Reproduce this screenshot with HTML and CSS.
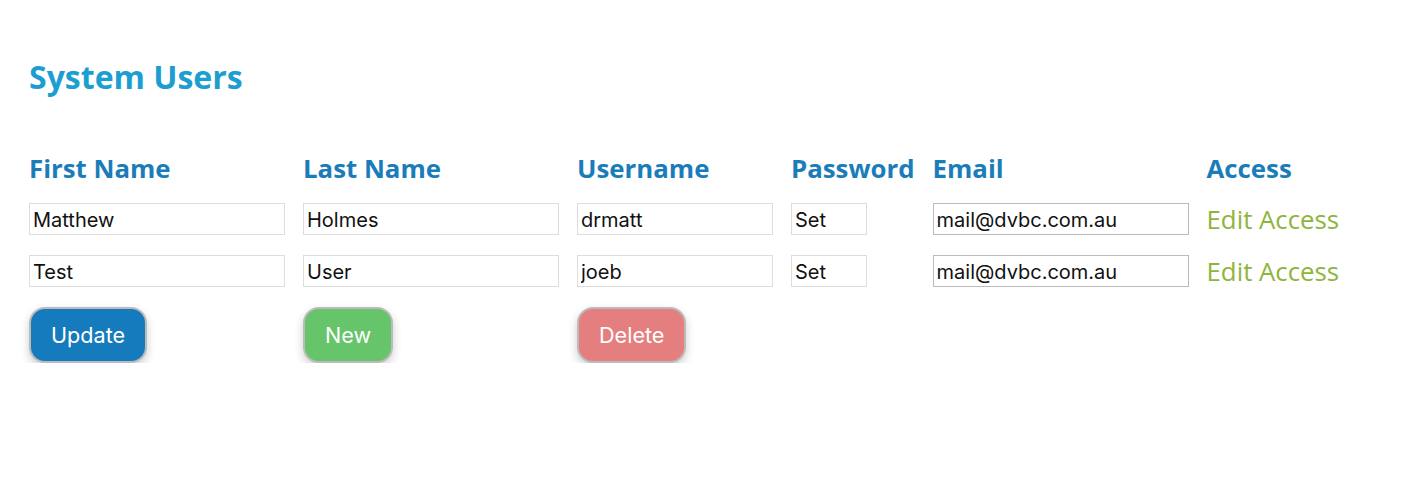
FILE: index.html
```html
<!DOCTYPE html>
<html lang="en">
<head>
    <meta charset="UTF-8">
    <title>System Users</title>
    <link rel="stylesheet" href="styles.css">
</head>
<body>
    <div class="page">
        <h1 class="title">System Users</h1>

        <div class="users">
            <div class="col-head">First Name</div>
            <div class="col-head">Last Name</div>
            <div class="col-head">Username</div>
            <div class="col-head">Password</div>
            <div class="col-head">Email</div>
            <div class="col-head">Access</div>

            <!-- user 1 -->
            <input class="field" type="text" value="Matthew">
            <input class="field" type="text" value="Holmes">
            <input class="field" type="text" value="drmatt">
            <input class="field pw" type="text" value="Set">
            <input class="field email" type="text" value="mail@dvbc.com.au">
            <a class="access" href="#">Edit Access</a>

            <!-- user 2 -->
            <input class="field" type="text" value="Test">
            <input class="field" type="text" value="User">
            <input class="field" type="text" value="joeb">
            <input class="field pw" type="text" value="Set">
            <input class="field email" type="text" value="mail@dvbc.com.au">
            <a class="access" href="#">Edit Access</a>

            <button class="btn btn-update">Update</button>
            <button class="btn btn-new">New</button>
            <button class="btn btn-delete">Delete</button>
        </div>
    </div>
</body>
</html>
```

FILE: styles.css
```css
body {
    margin: 0;
    background: #ffffff;
    font-family: "Open Sans", sans-serif;
}

.page {
    padding: 57px 29px 0;
}

.title {
    margin: 0 0 56px;
    font-size: 32px;
    line-height: 40px;
    font-weight: 700;
    color: #1c9fd0;
}

.users {
    display: grid;
    grid-template-columns: 256px 256px 196px auto 256px auto;
    justify-content: start;
    column-gap: 18px;
    row-gap: 20px;
    align-items: center;
    justify-items: start;
}

.col-head {
    font-size: 25.8px;
    line-height: 30px;
    font-weight: 700;
    color: #1a7db9;
}

.field {
    box-sizing: border-box;
    width: 100%;
    height: 32px;
    margin: 0;
    padding: 2px 3px 0;
    border: 1px solid #dddddd;
    font-family: "Inter", sans-serif;
    font-size: 20px;
    color: #111111;
    background: #ffffff;
}

.field.pw {
    width: 76px;
}

.field.email {
    border-color: #bbbbbb;
}

.access {
    font-size: 25.8px;
    line-height: 32px;
    color: #8fb43c;
    text-decoration: none;
}

.btn {
    height: 56px;
    padding: 0 20px;
    border: 2px solid #bbbbbb;
    border-radius: 16px;
    font-family: "Inter", sans-serif;
    font-size: 21.6px;
    color: #ffffff;
    cursor: pointer;
    box-shadow: 0 4px 10px rgba(0, 0, 0, 0.2);
}

.btn-update {
    background: #167bbc;
}

.btn-new {
    background: #66c46a;
}

.btn-delete {
    background: #e57e7e;
}
```
